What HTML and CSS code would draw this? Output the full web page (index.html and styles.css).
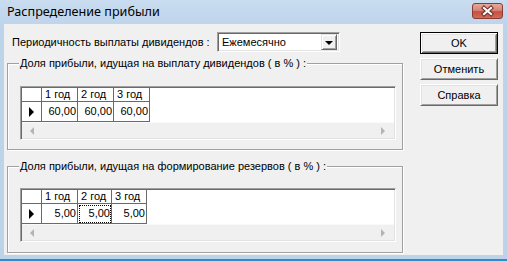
FILE: index.html
```html
<!DOCTYPE html>
<html lang="ru">
<head>
<meta charset="utf-8">
<link rel="stylesheet" href="styles.css">
</head>
<body>
<div class="window">
  <div class="titlebar">
    <span class="title">Распределение прибыли</span>
    <div class="close">
      <svg width="31" height="16" viewBox="0 0 31 16">
        <path d="M12 5 L19 11 M19 5 L12 11" stroke="#6b2e27" stroke-width="4.2" stroke-linecap="square"/>
        <path d="M12 5 L19 11 M19 5 L12 11" stroke="#fff" stroke-width="2.2" stroke-linecap="square"/>
      </svg>
    </div>
  </div>
  <div class="client">
    <div class="main">
      <div class="period">
        <span class="period-label">Периодичность выплаты дивидендов :</span>
        <div class="combo">
          <span class="combo-text">Ежемесячно</span>
          <span class="combo-btn"><span class="tri-down"></span></span>
        </div>
      </div>
      <div class="group group-first">
        <span class="group-title">Доля прибыли, идущая на выплату дивидендов ( в % ) :</span>
        <div class="grid">
          <div class="cells cols-a">
            <div class="cell hd"></div><div class="cell hd">1 год</div><div class="cell hd">2 год</div><div class="cell hd">3 год</div>
            <div class="cell dt ind"><span class="tri-right"></span></div><div class="cell dt num">60,00</div><div class="cell dt num">60,00</div><div class="cell dt num">60,00</div>
          </div>
          <div class="hscroll"><span class="tri-left"></span><span class="tri-r"></span></div>
        </div>
      </div>
      <div class="group group-second">
        <span class="group-title">Доля прибыли, идущая на формирование резервов ( в % ) :</span>
        <div class="grid">
          <div class="cells cols-b">
            <div class="cell hd"></div><div class="cell hd">1 год</div><div class="cell hd">2 год</div><div class="cell hd">3 год</div>
            <div class="cell dt ind"><span class="tri-right"></span></div><div class="cell dt num">5,00</div><div class="cell dt num focus">5,00</div><div class="cell dt num">5,00</div>
          </div>
          <div class="hscroll"><span class="tri-left"></span><span class="tri-r"></span></div>
        </div>
      </div>
    </div>
    <div class="buttons">
      <div class="btn default">OK</div>
      <div class="btn">Отменить</div>
      <div class="btn">Справка</div>
    </div>
  </div>
</div>
</body>
</html>
```

FILE: styles.css
```css
html, body {
  margin: 0;
  padding: 0;
  background: #bcd3ea;
}
body {
  font-family: "Liberation Sans", Arial, sans-serif;
  font-size: 11px;
  color: #000;
}
.window {
  width: 507px;
  height: 261px;
  box-sizing: border-box;
  padding: 0 4px 2px 4px;
  background: linear-gradient(#c9dcf0, #bcd3ea 30px, #bcd3ea);
  border-bottom: 2px solid #2e8ccc;
  display: flex;
  flex-direction: column;
}
.titlebar {
  height: 24px;
  flex: none;
  display: flex;
  align-items: center;
  justify-content: space-between;
  padding-left: 3px;
}
.title {
  font-family: "Noto Sans", "Liberation Sans", sans-serif;
  font-size: 12.6px;
  color: #000;
  padding-bottom: 1px;
}
.close {
  width: 31px;
  height: 16px;
  box-sizing: border-box;
  border: 1px solid #8b3b33;
  border-radius: 3px;
  background: linear-gradient(#e4a99a, #d88576 45%, #c8503e 55%, #d06c5a);
  display: flex;
  align-items: center;
  justify-content: center;
  margin-bottom: 3px;
}
.close svg {
  display: block;
  margin: -1px;
}
.client {
  flex: 1;
  background: #f0f0f0;
  display: flex;
  padding: 8px 5px 0 3px;
  border-bottom: 2px solid #bcd3ea;
}
.main {
  width: 398px;
  display: flex;
  flex-direction: column;
}
.period {
  height: 20px;
  display: flex;
  align-items: center;
}
.period-label {
  width: 205px;
  padding-left: 5px;
}
.combo {
  width: 123px;
  height: 20px;
  box-sizing: border-box;
  border-style: solid;
  border-width: 1px;
  border-color: #a0a0a0 #fff #fff #a0a0a0;
  box-shadow: inset 1px 1px 0 #696969, inset -1px -1px 0 #e3e3e3;
  background: #fff;
  display: flex;
  align-items: center;
  padding: 2px;
}
.combo-text {
  flex: 1;
  padding-left: 2px;
}
.combo-btn {
  width: 16px;
  height: 16px;
  box-sizing: border-box;
  background: #f0f0f0;
  border-style: solid;
  border-width: 1px;
  border-color: #e3e3e3 #696969 #696969 #e3e3e3;
  box-shadow: inset 1px 1px 0 #fff, inset -1px -1px 0 #a0a0a0;
  display: flex;
  align-items: center;
  justify-content: center;
}
.tri-down {
  width: 0;
  height: 0;
  border-left: 4px solid transparent;
  border-right: 4px solid transparent;
  border-top: 4px solid #000;
  margin-top: 1px;
}
.group {
  position: relative;
  border: 1px solid #a0a0a0;
  box-shadow: 1px 1px 0 #fff, inset 1px 1px 0 #fff;
  box-sizing: border-box;
  height: 87px;
  padding: 22px 0 0 12px;
  margin-right: 1px;
}
.group-first {
  margin-top: 11px;
}
.group-second {
  margin-top: 16px;
  height: 87px;
  padding-top: 21px;
}
.group-title {
  position: absolute;
  top: -7px;
  left: 11px;
  padding: 0 1px;
  background: #f0f0f0;
  white-space: nowrap;
}
.grid {
  width: 376px;
  height: 54px;
  box-sizing: border-box;
  border-style: solid;
  border-width: 1px;
  border-color: #a0a0a0 #fff #fff #a0a0a0;
  box-shadow: inset 1px 1px 0 #696969, inset -1px -1px 0 #e3e3e3;
  background: #fff;
  display: flex;
  flex-direction: column;
  padding: 1px;
}
.cells {
  display: grid;
  grid-template-rows: 14px 20px;
  justify-content: start;
}
.cols-a {
  grid-template-columns: 20px 36px 36px 36px;
}
.cols-b {
  grid-template-columns: 20px 36px 34px 35px;
}
.cell {
  box-sizing: border-box;
  border-right: 1px solid #6a6a6a;
  border-bottom: 1px solid #6a6a6a;
  white-space: nowrap;
  overflow: hidden;
}
.hd {
  line-height: 13px;
  padding-left: 3px;
}
.dt {
  line-height: 19px;
}
.ind {
  display: flex;
  align-items: center;
}
.num {
  text-align: right;
  padding-right: 1px;
}
.tri-right {
  display: block;
  width: 0;
  height: 0;
  margin-left: 7px;
  border-top: 5px solid transparent;
  border-bottom: 5px solid transparent;
  border-left: 5px solid #000;
}
.focus {
  outline: 1px dotted #000;
  outline-offset: -2px;
}
.hscroll {
  margin-top: auto;
  height: 17px;
  background: #f0f0f0;
  border-top: 1px solid #fafafa;
  display: flex;
  align-items: center;
  justify-content: space-between;
  padding: 0 9px 0 8px;
}
.tri-left {
  width: 0;
  height: 0;
  border-top: 4px solid transparent;
  border-bottom: 4px solid transparent;
  border-right: 4px solid #b4b4b4;
}
.tri-r {
  width: 0;
  height: 0;
  border-top: 4px solid transparent;
  border-bottom: 4px solid transparent;
  border-left: 4px solid #b4b4b4;
}
.buttons {
  margin-left: 16px;
  display: flex;
  flex-direction: column;
  gap: 4px;
}
.btn {
  width: 78px;
  height: 22px;
  box-sizing: border-box;
  border-style: solid;
  border-width: 1px;
  border-color: #fff #696969 #696969 #fff;
  box-shadow: inset 1px 1px 0 #e3e3e3, inset -1px -1px 0 #a0a0a0;
  background: #f0f0f0;
  display: flex;
  align-items: center;
  justify-content: center;
  font-size: 11px;
}
.btn.default {
  border: 1px solid #000;
  box-shadow: inset 1px 1px 0 #fff, inset -1px -1px 0 #696969, inset 2px 2px 0 #e3e3e3, inset -2px -2px 0 #a0a0a0;
}
```
